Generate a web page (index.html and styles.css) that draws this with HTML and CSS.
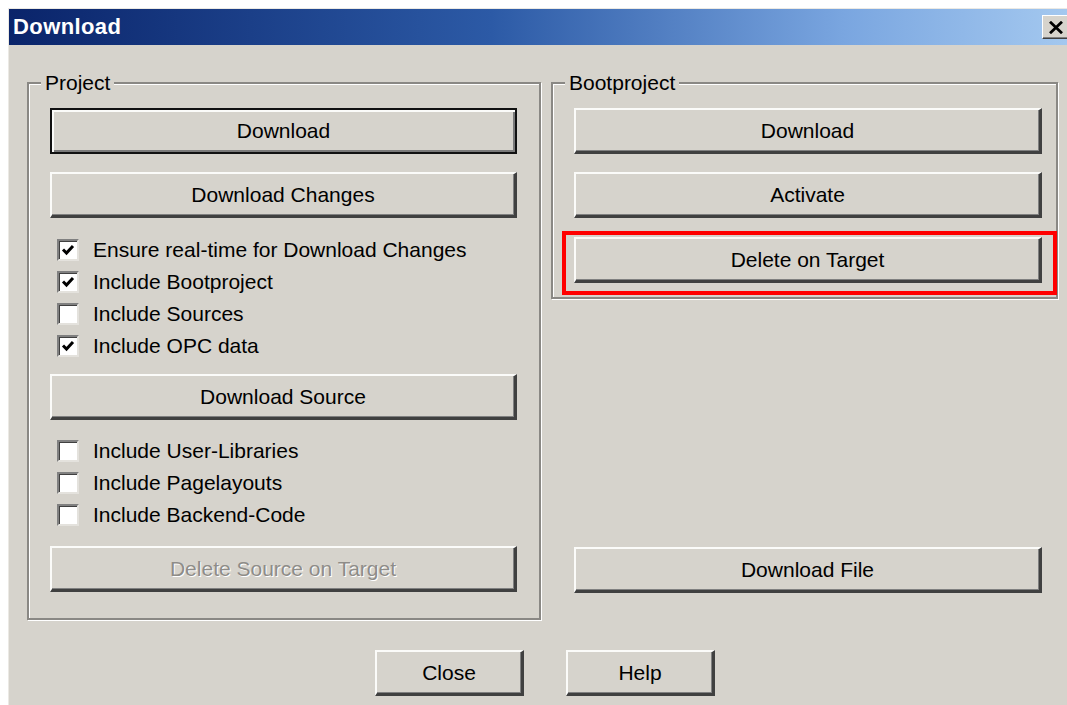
FILE: index.html
```html
<!DOCTYPE html>
<html lang="en">
<head>
<meta charset="utf-8">
<title>Download</title>
<link rel="stylesheet" href="styles.css">
</head>
<body>
<div class="dialog">
  <div class="titlebar">
    <span class="title">Download</span>
    <button class="title-close" aria-label="Close">
      <svg width="16" height="13" viewBox="0 0 16 13"><path d="M2 0.8 L14 12.2 M14 0.8 L2 12.2" stroke="#000" stroke-width="2.8" fill="none"/></svg>
    </button>
  </div>

  <div class="content">
    <div class="columns">
      <fieldset class="group group-project">
        <legend>Project</legend>
        <button class="btn btn-default">Download</button>
        <button class="btn gap-18">Download Changes</button>
        <div class="checks checks-top">
          <label class="check"><span class="box on"><svg viewBox="0 0 16 16"><path d="M3 7.5 L6.5 11 L13 4" stroke="#000" stroke-width="3" fill="none"/></svg></span>Ensure real-time for Download Changes</label>
          <label class="check"><span class="box on"><svg viewBox="0 0 16 16"><path d="M3 7.5 L6.5 11 L13 4" stroke="#000" stroke-width="3" fill="none"/></svg></span>Include Bootproject</label>
          <label class="check"><span class="box"></span>Include Sources</label>
          <label class="check"><span class="box on"><svg viewBox="0 0 16 16"><path d="M3 7.5 L6.5 11 L13 4" stroke="#000" stroke-width="3" fill="none"/></svg></span>Include OPC data</label>
        </div>
        <button class="btn">Download Source</button>
        <div class="checks checks-bottom">
          <label class="check"><span class="box"></span>Include User-Libraries</label>
          <label class="check"><span class="box"></span>Include Pagelayouts</label>
          <label class="check"><span class="box"></span>Include Backend-Code</label>
        </div>
        <button class="btn btn-disabled" disabled>Delete Source on Target</button>
      </fieldset>

      <div class="side">
        <fieldset class="group group-boot">
          <legend>Bootproject</legend>
          <button class="btn">Download</button>
          <button class="btn gap-18">Activate</button>
          <div class="highlight">
            <button class="btn">Delete on Target</button>
          </div>
        </fieldset>
        <button class="btn btn-file">Download File</button>
      </div>
    </div>

    <div class="footer">
      <button class="btn btn-small">Close</button>
      <button class="btn btn-small">Help</button>
    </div>
  </div>
</div>
</body>
</html>
```

FILE: styles.css
```css
html, body {
  margin: 0;
  padding: 0;
  background: #ffffff;
  overflow: hidden;
}

body {
  font-family: "Liberation Sans", Arial, sans-serif;
  font-size: 21px;
  color: #000;
}

.dialog {
  margin: 8px 0 0 8px;
  width: 1073px;
  height: 720px;
  background: #d6d3cc;
  border-left: 1px solid #ebe9e4;
  border-top: 1px solid #ebe9e4;
  box-sizing: border-box;
}

/* caption bar */
.titlebar {
  height: 36px;
  display: flex;
  align-items: center;
  justify-content: space-between;
  padding: 0 11px 0 4px;
  background: linear-gradient(to right, #0a246a 0%, #2c5aa6 45%, #7aa6e0 78%, #a6caf0 100%);
}

.title {
  color: #fff;
  font-weight: bold;
  font-size: 22px;
  letter-spacing: 0.4px;
}

.title-close {
  width: 28px;
  height: 24px;
  padding: 0;
  display: flex;
  align-items: center;
  justify-content: center;
  background: #d6d3cc;
  border: 1px solid;
  border-color: #fff #404040 #404040 #fff;
  box-shadow: inset -1px -1px 0 #808080;
  box-sizing: border-box;
}

.content {
  padding-top: 26px;
}

.columns {
  display: grid;
  grid-template-columns: 514px 507px;
  column-gap: 10px;
  padding-left: 18px;
}

/* etched group frame */
.group {
  margin: 0;
  padding: 0;
  min-width: 0;
  border: 2px solid #8a8884;
  box-shadow: inset 1px 1px 0 #fff, 1px 1px 0 #fff;
  display: flex;
  flex-direction: column;
}

.group legend {
  margin-left: 12px;
  padding: 0 4px;
  line-height: 24px;
  background: #d6d3cc;
}

.group-project {
  padding: 13px 22px 26px 0;
}

.group-project > :not(legend) {
  margin-left: 21px;
}

.group-boot {
  padding: 13px 0 2px 0;
}

.group-boot > .btn {
  margin-left: 21px;
  margin-right: 14px;
}

.side {
  display: flex;
  flex-direction: column;
}

/* push buttons */
.btn {
  display: block;
  height: 46px;
  padding: 0;
  font-family: inherit;
  font-size: 21px;
  color: #000;
  background: #d6d3cc;
  border-style: solid;
  border-width: 2px 3px 3px 2px;
  border-color: #fbfbf9 #404040 #404040 #fbfbf9;
  box-shadow: inset -1px -1px 0 #808080;
  box-sizing: border-box;
  text-align: center;
}

.btn-default {
  border: 2px solid #111;
  box-shadow: inset 2px 2px 0 #fbfbf9, inset -2px -2px 0 #7a7a7a;
}

.gap-18 {
  margin-top: 18px;
}

.btn-disabled {
  color: #8e8c88;
  text-shadow: 1px 1px 0 #fff;
}

.btn-file {
  margin: auto 16px 27px 23px;
}

.highlight {
  display: flex;
  flex-direction: column;
  margin: 13px -1px 0 9px;
  padding: 2px 11px 8px 8px;
  border: 4px solid #ff0000;
}

/* check boxes */
.checks {
  display: flex;
  flex-direction: column;
}

.checks-top {
  margin-top: 14px;
  margin-bottom: 14px;
}

.checks-bottom {
  margin-top: 13px;
  margin-bottom: 17px;
}

.check {
  height: 32px;
  display: flex;
  align-items: center;
  padding-left: 7px;
  padding-top: 3px;
  box-sizing: border-box;
  gap: 14px;
  white-space: nowrap;
}

.box {
  width: 22px;
  height: 22px;
  flex: none;
  background: #fff;
  border: 2px solid;
  border-color: #808080 #e4e2dd #e4e2dd #808080;
  box-shadow: inset 1px 1px 0 #404040;
  box-sizing: border-box;
  display: flex;
  align-items: center;
  justify-content: center;
}

.box svg {
  width: 16px;
  height: 16px;
}

/* dialog buttons */
.footer {
  display: flex;
  justify-content: center;
  gap: 42px;
  padding-top: 30px;
}

.btn-small {
  width: 149px;
}
```
